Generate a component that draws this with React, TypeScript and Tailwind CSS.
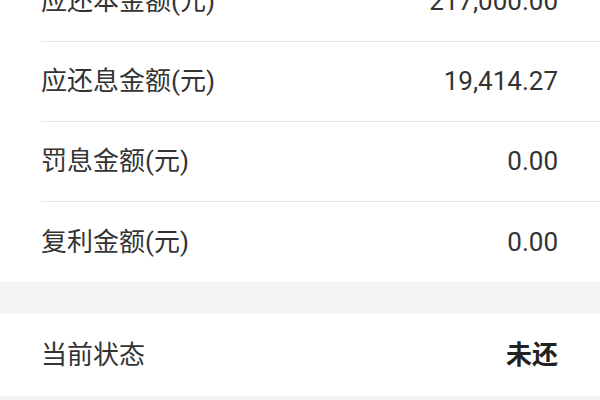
const rows = [
  { label: "应还本金额(元)", value: "217,000.00" },
  { label: "应还息金额(元)", value: "19,414.27" },
  { label: "罚息金额(元)", value: "0.00" },
  { label: "复利金额(元)", value: "0.00" },
];

const font = "font-['Roboto','Noto_Sans_CJK_SC',sans-serif]";

export default function App() {
  return (
    <div className={`w-[600px] h-[400px] overflow-hidden bg-[#f5f5f5] ${font}`}>
      <div className="-mt-[38px] bg-white pl-[41px]">
        {rows.map((r, i) => (
          <div
            key={r.label}
            className={`flex h-[80px] items-center justify-between pr-[42px] ${i < rows.length - 1 ? "border-b border-[#e8e8e8]" : ""}`}
          >
            <span className="text-[26px] text-[#333]">{r.label}</span>
            <span className="text-[26px] text-[#333]">{r.value}</span>
          </div>
        ))}
      </div>
      <div className="h-[32px]" />
      <div className="flex h-[82px] items-center justify-between bg-white pl-[41px] pr-[42px]">
        <span className="text-[26px] text-[#333]">当前状态</span>
        <span className="text-[26px] font-bold text-[#222]">未还</span>
      </div>
    </div>
  );
}
